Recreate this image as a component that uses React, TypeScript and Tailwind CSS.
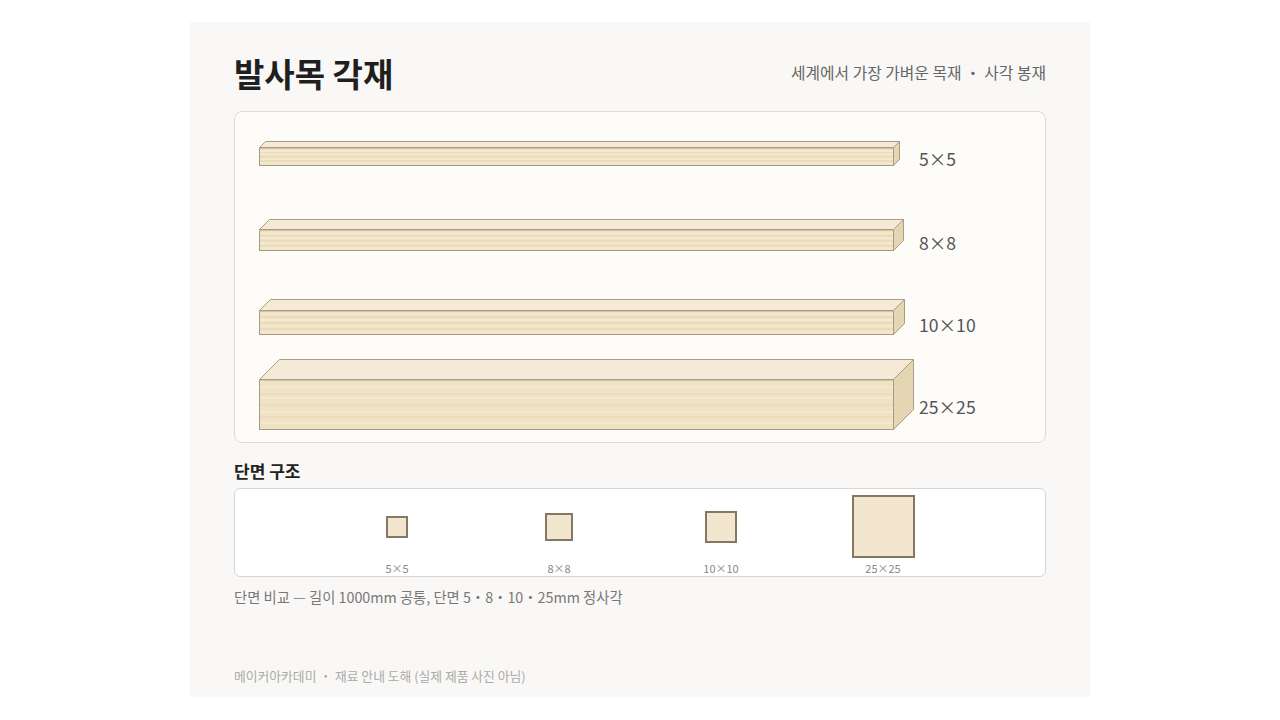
const FRONT_W = 634

type BeamSpec = {
  label: string
  h: number
  d: number
  row: string
  spacer: string
  face: string
}

const beams: BeamSpec[] = [
  { label: "5×5", h: 18, d: 6, row: "", spacer: "h-[6px]", face: "h-[18px]" },
  { label: "8×8", h: 21, d: 10, row: "mt-[53px]", spacer: "h-[10px]", face: "h-[21px]" },
  { label: "10×10", h: 24, d: 11, row: "mt-[48px]", spacer: "h-[11px]", face: "h-[24px]" },
  { label: "25×25", h: 50, d: 20, row: "mt-[24px]", spacer: "h-[20px]", face: "h-[50px]" },
]

const sections = [
  { label: "5×5", box: "size-[22px]" },
  { label: "8×8", box: "size-[28px]" },
  { label: "10×10", box: "size-[32px]" },
  { label: "25×25", box: "size-[63px]" },
]

function Beam({ h, d }: { h: number; d: number }) {
  const W = FRONT_W
  const x0 = 0.5
  const y0 = 0.5
  const stripes = [0.14, 0.27, 0.36, 0.5, 0.63, 0.74, 0.86]
  return (
    <svg width={W + d + 1} height={h + d + 1} className="block">
      {/* top face */}
      <polygon
        points={`${x0},${y0 + d} ${x0 + d},${y0} ${x0 + W + d},${y0} ${x0 + W},${y0 + d}`}
        fill="#f4ead7"
        stroke="#a99c81"
        strokeWidth="1"
        strokeLinejoin="round"
      />
      {/* front face */}
      <rect x={x0} y={y0 + d} width={W} height={h} fill="#f0e3c5" />
      {stripes.map((s, i) => (
        <line
          key={i}
          x1={x0}
          x2={x0 + W}
          y1={y0 + d + Math.round(h * s) + 0.5}
          y2={y0 + d + Math.round(h * s) + 0.5}
          stroke={i % 2 === 0 ? "#f6eedc" : "#e6d6b3"}
          strokeWidth="1"
        />
      ))}
      <rect x={x0} y={y0 + d} width={W} height={h} fill="none" stroke="#a99c81" strokeWidth="1" />
      <line x1={x0} x2={x0 + W} y1={y0 + d + 1} y2={y0 + d + 1} stroke="#d2c3a2" strokeWidth="1" />
      {/* side face */}
      <polygon
        points={`${x0 + W},${y0 + d} ${x0 + W + d},${y0} ${x0 + W + d},${y0 + h} ${x0 + W},${y0 + h + d}`}
        fill="#e4d5b3"
        stroke="#a99c81"
        strokeWidth="1"
        strokeLinejoin="round"
      />
    </svg>
  )
}

export default function App() {
  return (
    <div
      className="min-h-screen bg-white flex justify-center py-[22px]"
      style={{ fontFamily: '"Noto Sans CJK KR", "Noto Sans", sans-serif' }}
    >
      <div className="w-[900px] h-[675px] bg-[#f9f8f6] px-[44px] pt-[29px] pb-[12px] flex flex-col">
        <header className="flex items-center justify-between">
          <h1 className="text-[33px] leading-[44px] font-bold text-[#1f1f1f]">발사목 각재</h1>
          <p className="text-[15.8px] leading-[22px] text-[#666666]">세계에서 가장 가벼운 목재 ・ 사각 봉재</p>
        </header>

        <div className="mt-[16px] rounded-[8px] border border-[#e0dbd0] bg-[#fdfcf9] pl-[24px] pt-[29px] pb-[12px]">
          {beams.map((b) => (
            <div key={b.label} className={`flex ${b.row}`}>
              <div className="w-[660px] shrink-0">
                <Beam h={b.h} d={b.d} />
              </div>
              <div className="flex flex-col">
                <div className={b.spacer} />
                <div className={`${b.face} flex items-center pt-[6px]`}>
                  <span className="text-[17.6px] leading-[24px] text-[#555555] whitespace-nowrap">{b.label}</span>
                </div>
              </div>
            </div>
          ))}
        </div>

        <h2 className="mt-[16px] text-[17px] leading-[24px] font-bold text-[#222222]">단면 구조</h2>

        <div className="mt-[5px] h-[89px] rounded-[6px] border border-[#d6d6d6] bg-white pt-[6px] flex justify-center">
          {sections.map((s) => (
            <div key={s.label} className="w-[162px] flex flex-col items-center">
              <div className="h-[63px] flex items-center justify-center">
                <div className={`${s.box} border-2 border-[#857862] bg-[#f2e6cf]`} />
              </div>
              <span className="mt-[3px] text-[11px] leading-[14px] text-[#888888]">{s.label}</span>
            </div>
          ))}
        </div>

        <p className="mt-[10px] text-[14.3px] leading-[20px] text-[#777777]">
          단면 비교 — 길이 1000mm 공통, 단면 5・8・10・25mm 정사각
        </p>

        <p className="mt-auto text-[12.8px] leading-[18px] text-[#aaaaaa]">
          메이커아카데미 ・ 재료 안내 도해 (실제 제품 사진 아님)
        </p>
      </div>
    </div>
  )
}
